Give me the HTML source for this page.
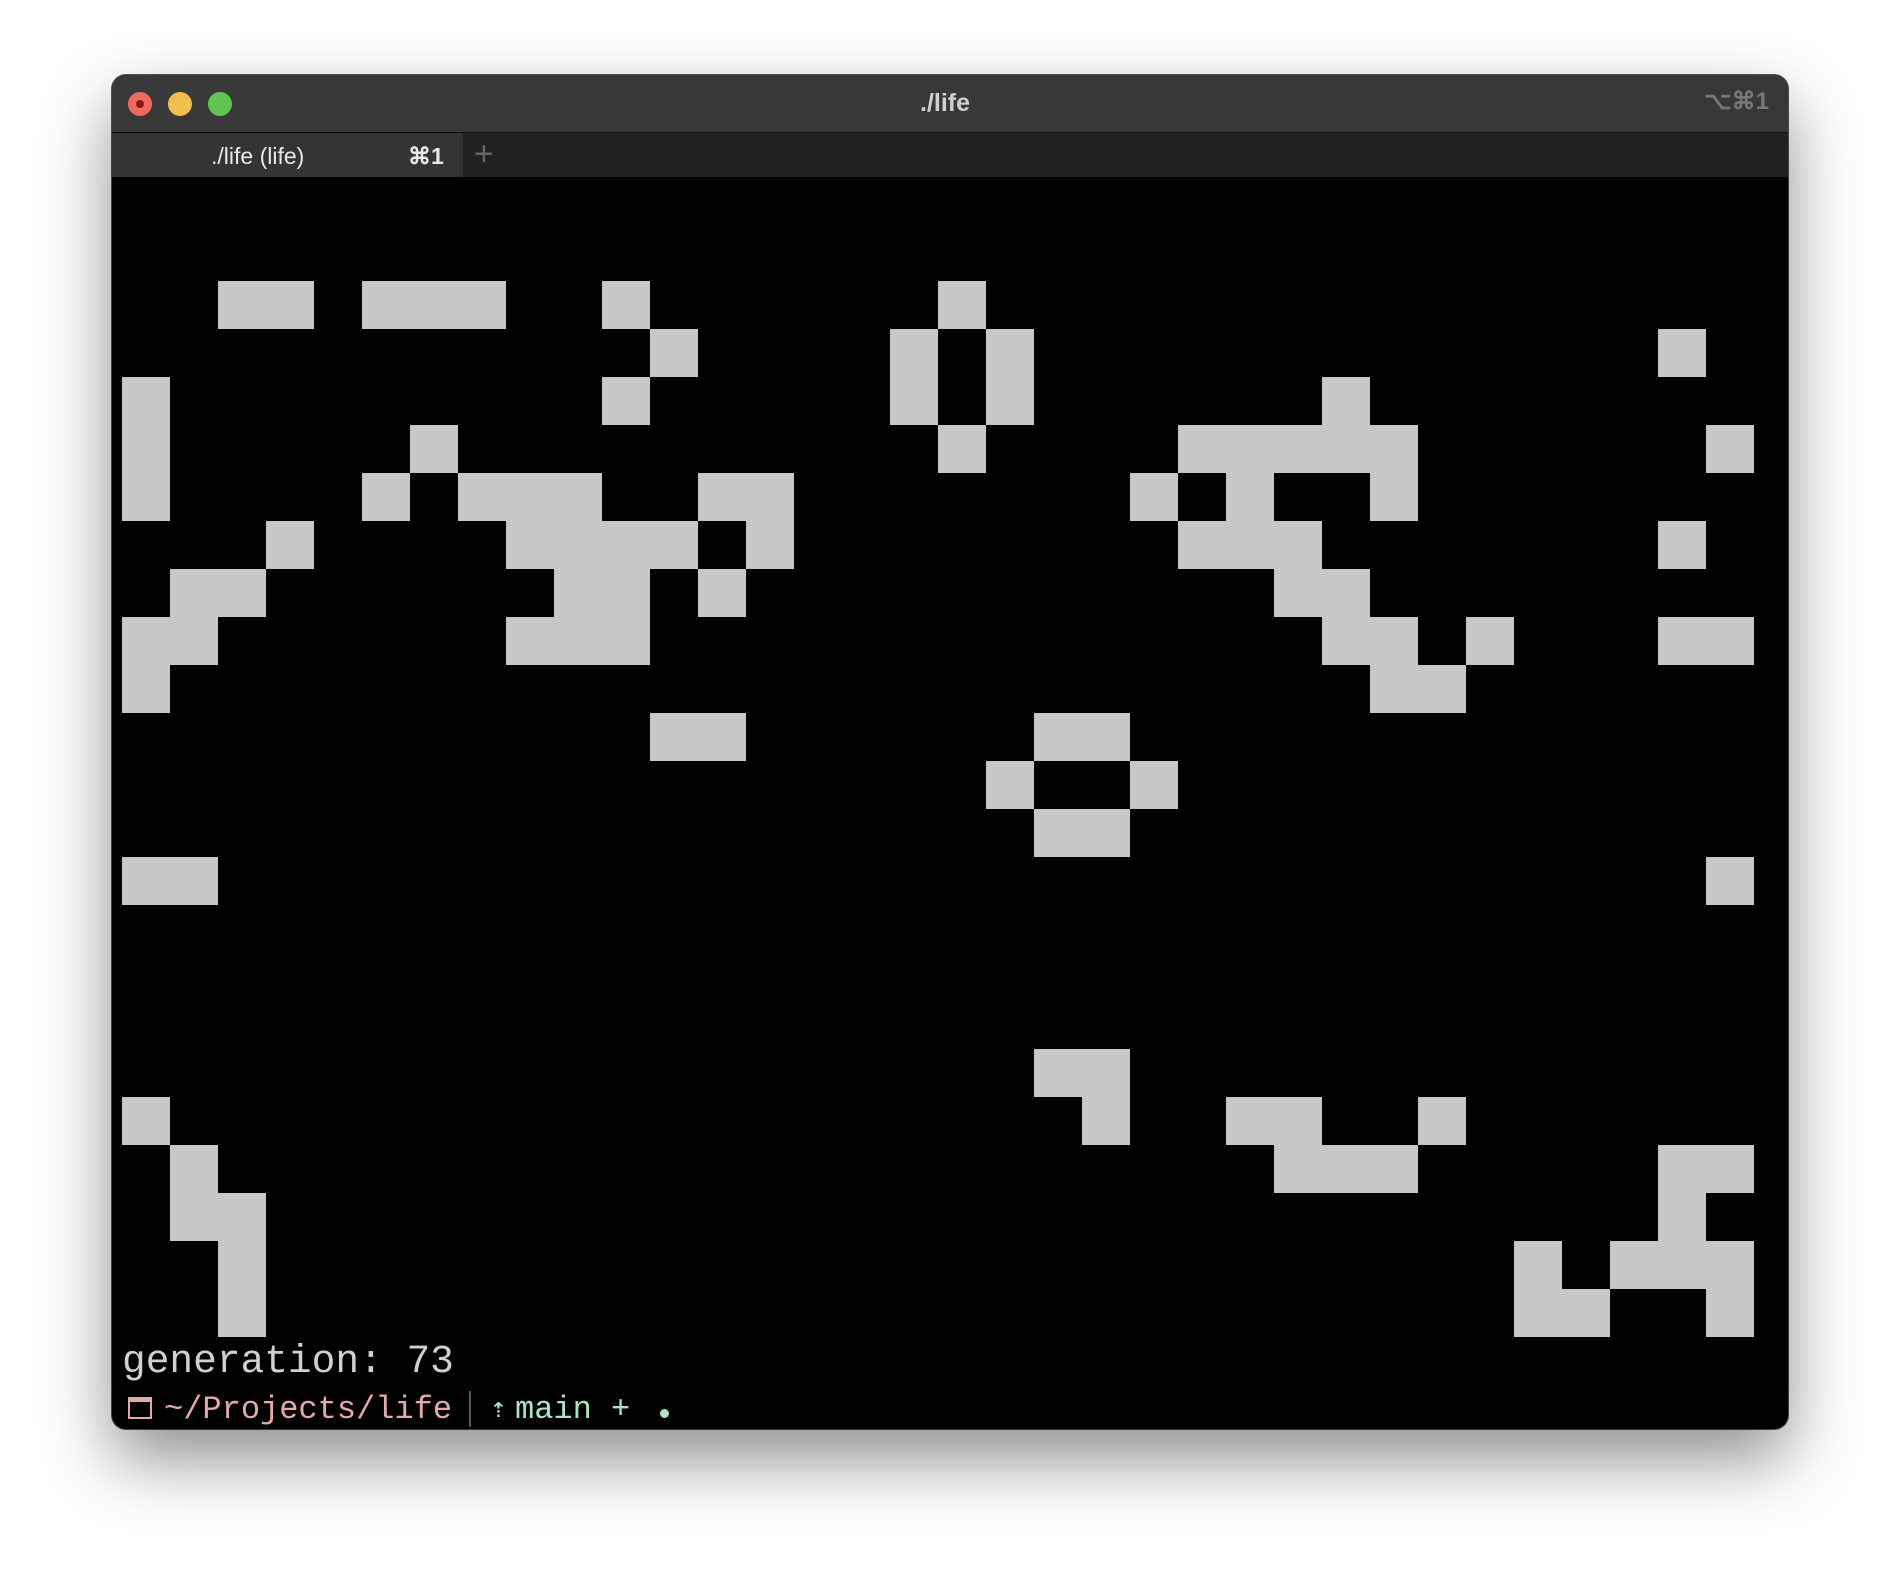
<!DOCTYPE html>
<html><head><meta charset="utf-8"><style>
html,body{margin:0;padding:0;width:1900px;height:1578px;background:#fff;overflow:hidden}
.win{position:absolute;left:112px;top:75px;width:1676px;height:1354px;border-radius:14px;background:#000;overflow:hidden;box-shadow:0 30px 70px rgba(0,0,0,0.45),0 0 0 1px #555;}
.title{position:absolute;left:0;top:0;width:100%;height:57px;background:#383838;border-bottom:1px solid #111}
.tabs{position:absolute;left:0;top:58px;width:100%;height:44px;background:#212121}
.tab{position:absolute;left:0;top:0;width:351px;height:44px;background:#343434}
.dot{position:absolute;top:17px;width:24px;height:24px;border-radius:50%}
.c{position:absolute;background:#c7c7c7;width:48px;height:48px}
.t{font-family:"Liberation Sans",sans-serif;position:absolute}
.m{font-family:"Liberation Mono",monospace;position:absolute;white-space:pre}
</style></head><body>
<div class="win">
 <div class="title">
  <div class="dot" style="left:16px;background:#ec6a5e"><div style="position:absolute;left:8px;top:8px;width:8px;height:8px;border-radius:50%;background:#8c1a10"></div></div>
  <div class="dot" style="left:56px;background:#f4bf4f"></div>
  <div class="dot" style="left:96px;background:#61c554"></div>
  <div class="t" style="left:808px;top:14px;font-size:25px;font-weight:bold;color:#cfcfcf">./life</div>
  <div class="t" style="left:1592px;top:12px;font-size:24px;font-weight:bold;color:#777">⌥⌘1</div>
 </div>
 <div class="tabs">
  <div class="tab">
   <div class="t" style="left:99px;top:10px;font-size:23px;color:#e8e8e8">./life (life)</div>
   <div class="t" style="left:296px;top:10px;font-size:23px;color:#e8e8e8;font-weight:bold">⌘1</div>
  </div>
  <div class="t" style="left:362px;top:2px;font-size:34px;color:#666;font-weight:200">+</div>
 </div>
 <div id="g" style="position:absolute;left:10px;top:110px"></div>
 <div class="m" style="left:10px;top:1264px;font-size:39.5px;color:#d0d0d0">generation: 73</div>
 <div style="position:absolute;left:16px;top:1322px;width:24px;height:22px;border:2px solid #e4a9a9;border-top-width:5px;box-sizing:border-box"></div>
 <div class="m" style="left:52px;top:1316px;font-size:32px;color:#e4a9a9">~/Projects/life</div>
 <div style="position:absolute;left:357px;top:1316px;width:2px;height:36px;background:#555"></div>
 <div class="m" style="left:378px;top:1316px;font-size:28px;color:#a9e4c4">⇡</div>
 <div class="m" style="left:403px;top:1316px;font-size:32px;color:#a9e4c4">main +</div>
 <div style="position:absolute;left:548px;top:1334px;width:9px;height:9px;border-radius:50%;background:#a9e4c4"></div>
</div>
<script>
var cells={2:[2,3,5,6,7,10,17],3:[11,16,18,32],4:[0,10,16,18,25],5:[0,6,17,22,23,24,25,26,33],6:[0,5,7,8,9,12,13,21,23,26],7:[3,8,9,10,11,13,22,23,24,32],8:[1,2,9,10,12,24,25],9:[0,1,8,9,10,25,26,28,32,33],10:[0,26,27],11:[11,12,19,20],12:[18,21],13:[19,20],14:[0,1,33],18:[19,20],19:[0,20,23,24,27],20:[1,24,25,26,32,33],21:[1,2,32],22:[2,29,31,32,33],23:[2,29,30,33]};
var h='';for(var r in cells){cells[r].forEach(function(c){h+='<div class="c" style="left:'+(c*48)+'px;top:'+(r*48)+'px"></div>';});}
document.getElementById('g').innerHTML=h;
</script>
</body></html>
